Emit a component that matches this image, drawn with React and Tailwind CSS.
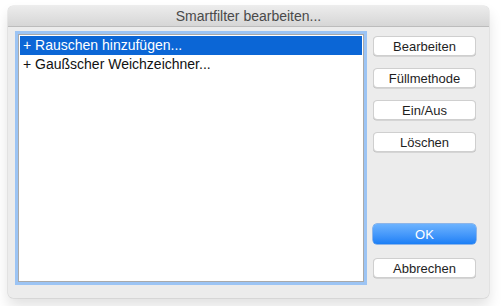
import React from "react";

const font = { fontFamily: '"Liberation Sans", Arial, sans-serif' };

const Btn = ({ children, primary }) => (
  <button
    className={
      primary
        ? "h-[20px] w-[103px] rounded-[4px] bg-gradient-to-b from-[#6cb3fe] to-[#1a7ff6] text-[13px] leading-none text-white shadow-[0_0_0_0.5px_#2f7fe6]"
        : "h-[20px] w-[103px] rounded-[4px] border border-[#cfcfcf] bg-white text-[13px] leading-none text-[#1e1e1e] shadow-[0_0.5px_0_#bdbdbd]"
    }
  >
    {children}
  </button>
);

const App = () => {
  const items = ["+ Rauschen hinzufügen...", "+ Gaußscher Weichzeichner..."];

  return (
    <div className="h-[306px] w-[501px] bg-white pl-[8px] pt-[6px]" style={font}>
      <div className="flex h-[292px] w-[481px] flex-col overflow-hidden rounded-[5px] bg-[#ececec] shadow-[0_8px_14px_rgba(0,0,0,0.12),0_0_0_0.5px_rgba(0,0,0,0.12)]">
        <div className="flex h-[21px] shrink-0 items-center justify-center border-b border-[#bcbcbc] bg-gradient-to-b from-[#ececec] to-[#d6d6d6] text-[14px] text-[#4a4a4a]">
          Smartfilter bearbeiten...
        </div>
        <div className="flex flex-1 pb-[16px] pl-[10px] pr-[13px] pt-[7px]">
          <div className="h-[248px] w-[346px] border border-[#a9a9a9] bg-white p-[1px] shadow-[0_0_0_3px_#9cc4f4]">
            {items.map((it, i) => (
              <div
                key={i}
                className={
                  i === 0
                    ? "flex h-[19px] items-center bg-[#0b66d6] pl-[3px] text-[14px] text-white"
                    : "flex h-[19px] items-center pl-[3px] text-[14px] text-[#111]"
                }
              >
                {it}
              </div>
            ))}
          </div>
          <div className="ml-[9px] flex flex-col pt-[2px]">
            <div className="flex flex-col gap-[12px]">
              <Btn>Bearbeiten</Btn>
              <Btn>Füllmethode</Btn>
              <Btn>Ein/Aus</Btn>
              <Btn>Löschen</Btn>
            </div>
            <div className="mt-[72px] flex flex-col gap-[14px]">
              <Btn primary>OK</Btn>
              <Btn>Abbrechen</Btn>
            </div>
          </div>
        </div>
      </div>
    </div>
  );
};

export default App;
